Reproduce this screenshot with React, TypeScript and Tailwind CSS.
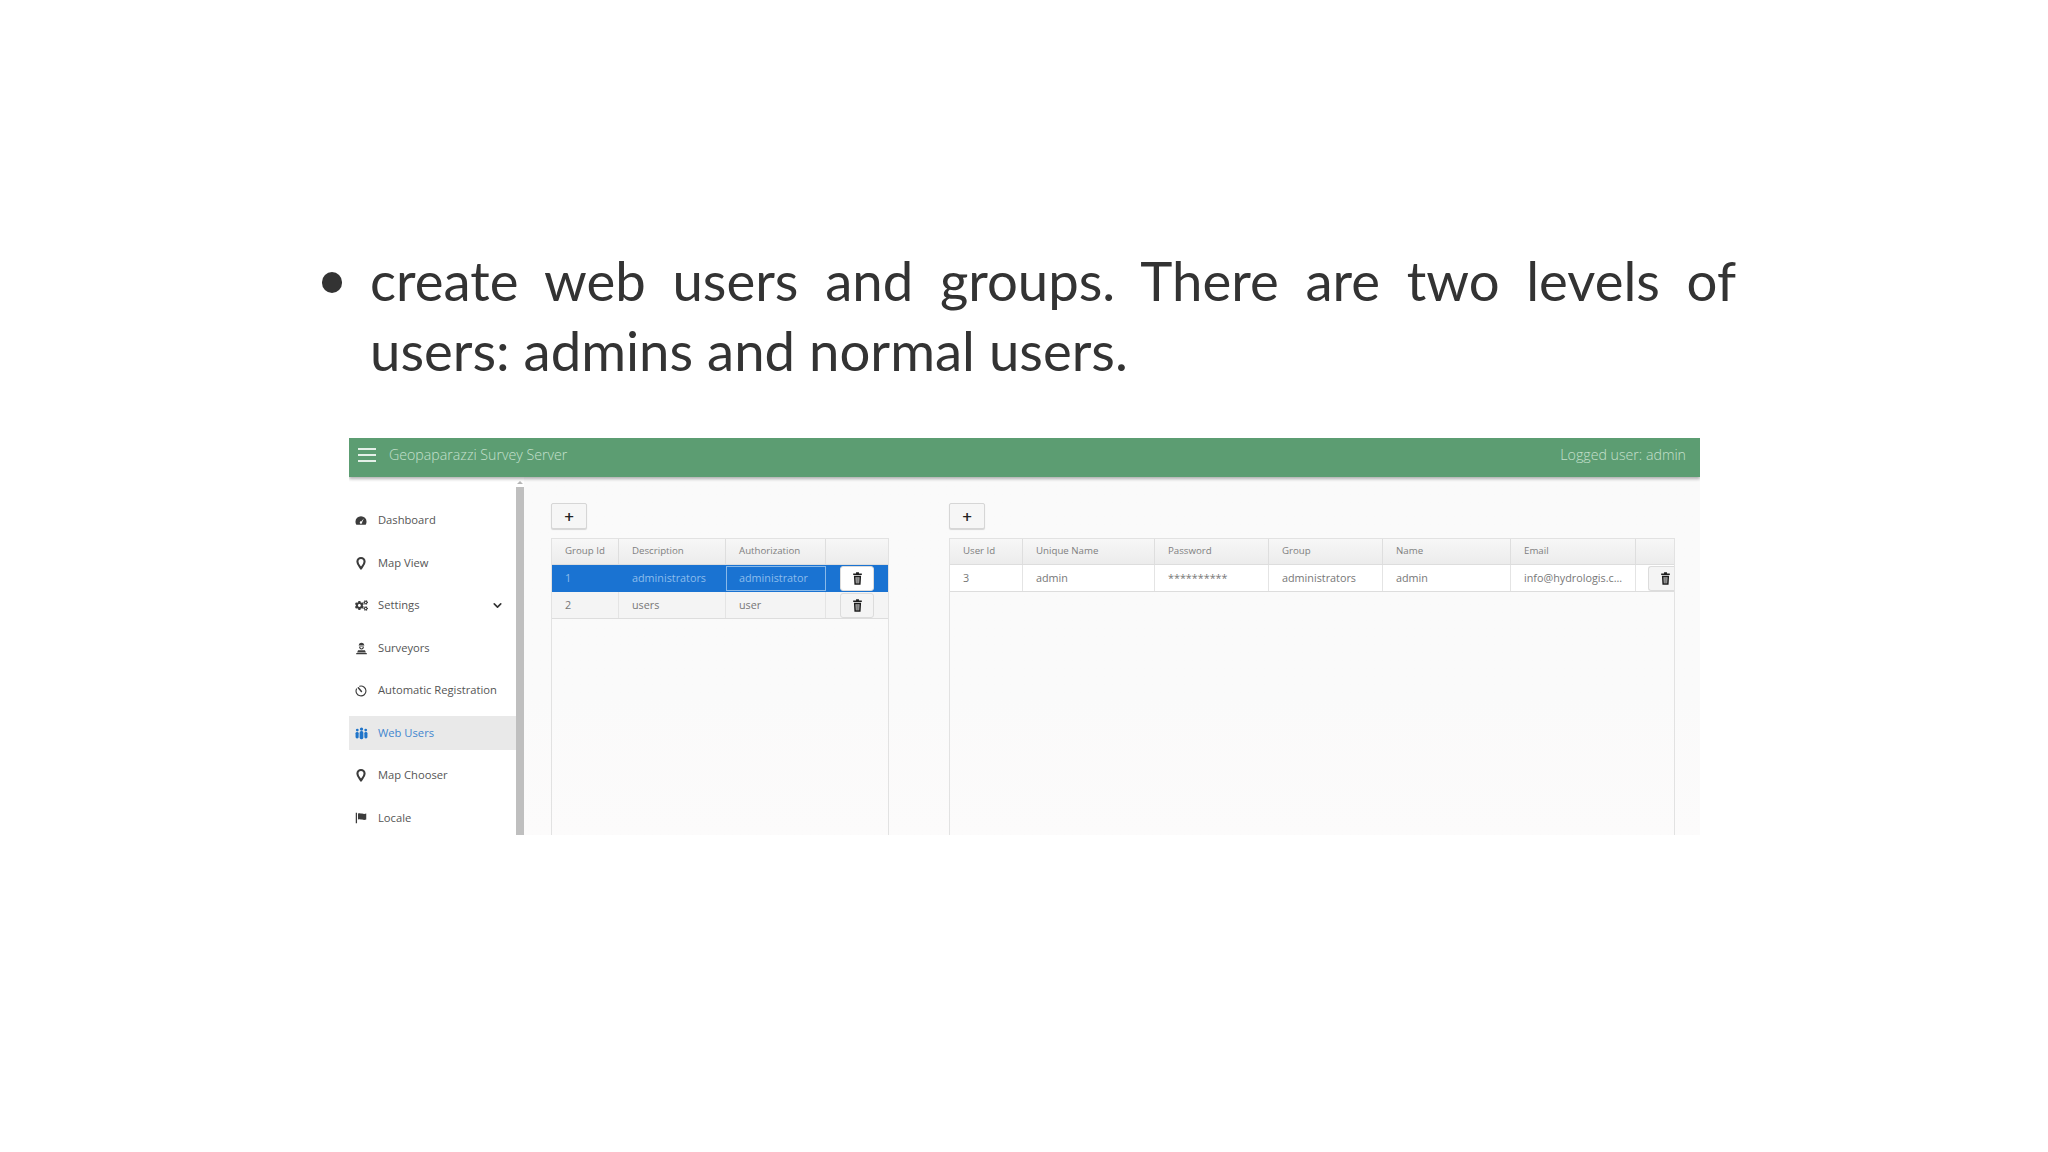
import { ChevronDown } from 'lucide-react';
import { FaCogs } from 'react-icons/fa';

function DashboardIcon() {
  return (
    <svg viewBox="0 0 16 14" className="h-[11px] w-[12px]" fill="currentColor">
      <path d="M8 1.2A7.4 7.4 0 0 0 .6 8.6c0 1.4.4 2.7 1 3.7.2.3.5.5.9.5h11c.4 0 .7-.2.9-.5.6-1 1-2.3 1-3.7A7.4 7.4 0 0 0 8 1.2Z" />
      <path d="M11.8 4.4 8.3 8.2a1.6 1.6 0 1 0 1.2 1.1Z" fill="#ffffff" />
    </svg>
  );
}

function PinIcon() {
  return (
    <svg viewBox="0 0 12 16" className="h-[13px] w-[10px]" fill="none" stroke="currentColor" strokeWidth="2.6">
      <path d="M6 14.2C4.4 11.6 1.6 8.6 1.6 5.7a4.4 4.4 0 0 1 8.8 0c0 2.9-2.8 5.9-4.4 8.5Z" strokeLinejoin="round" />
    </svg>
  );
}

function SurveyorIcon() {
  return (
    <svg viewBox="0 0 16 16" className="h-[13px] w-[13px]" fill="currentColor">
      <path d="M4.8 3.4C5 1.8 6.3.8 8 .8s3 1 3.2 2.6l.4 1H4.4l.4-1Z" />
      <path d="M5 5.4h6c0 2.2-1.2 3.8-3 3.8S5 7.6 5 5.4Zm1.4.9c.2 1 .8 1.7 1.6 1.7s1.4-.7 1.6-1.7H6.4Z" />
      <path d="M3.8 10.2h8.4l1.2 2.8H2.6l1.2-2.8Z" />
      <rect x="1.4" y="13.6" width="13.2" height="1.6" rx=".5" />
    </svg>
  );
}

function TimerIcon() {
  return (
    <svg viewBox="0 0 16 16" className="h-[12px] w-[12px]" fill="none" stroke="currentColor" strokeWidth="1.5">
      <path d="M6.2 1.6A6.6 6.6 0 1 1 2 5.2" strokeLinecap="round" />
      <path d="M4.4 3.6 8.6 8.6" strokeWidth="2" strokeLinecap="round" />
    </svg>
  );
}

function GroupIcon() {
  return (
    <svg viewBox="0 0 16 16" className="h-[13px] w-[13px]" fill="currentColor">
      <circle cx="8" cy="2.6" r="2" />
      <rect x="5.7" y="5" width="4.6" height="10" rx="2" />
      <circle cx="2.8" cy="3.8" r="1.7" />
      <rect x=".7" y="6" width="3.8" height="8" rx="1.8" />
      <circle cx="13.2" cy="3.8" r="1.7" />
      <rect x="11.5" y="6" width="3.8" height="8" rx="1.8" />
    </svg>
  );
}

function FlagIcon() {
  return (
    <svg viewBox="0 0 16 16" className="h-[12px] w-[12px]" fill="currentColor">
      <rect x="1" y="1" width="1.7" height="14" />
      <path d="M4 2c2-.8 3.800-.4 5.400.1 1.800.5 3.600.7 5.600-.1v8c-2 .8-3.800.6-5.600.1C7.800 9.600 6 9.200 4 10V2Z" />
    </svg>
  );
}

function TrashIcon() {
  return (
    <svg viewBox="0 0 10 14" className="h-[13px] w-[9px] text-[#1c1c1c]" fill="currentColor">
      <path d="M3.400 0h3.200v1.400H9.800v1.800H.2V1.400h3.200V0Z" />
      <path d="M1 4h8l-.6 10H1.600L1 4Zm1.900 1.600.3 6.800h3.600l.3-6.800H2.900Z" />
      <rect x="3.500" y="5.600" width="3" height="6.800" fill="currentColor" opacity="0.55" />
    </svg>
  );
}

const navItems = [
  { label: 'Dashboard', icon: <DashboardIcon /> },
  { label: 'Map View', icon: <PinIcon /> },
  { label: 'Settings', icon: <FaCogs className="h-[13px] w-[13px]" />, hasChevron: true },
  { label: 'Surveyors', icon: <SurveyorIcon /> },
  { label: 'Automatic Registration', icon: <TimerIcon /> },
  { label: 'Web Users', icon: <GroupIcon />, active: true },
  { label: 'Map Chooser', icon: <PinIcon /> },
  { label: 'Locale', icon: <FlagIcon /> },
];

function Sidebar() {
  return (
    <aside className="flex w-[175px] shrink-0 bg-white">
      <nav className="flex w-[167px] flex-col gap-[8.5px] pt-[26px]">
        {navItems.map((item) => (
          <div
            key={item.label}
            className={`flex h-[34px] shrink-0 items-center pr-[12px] pt-[1px] text-[11.2px] ${
              item.active ? 'bg-[#e9e9e9] text-[#3f86cf]' : 'text-[#555555]'
            }`}
          >
            <span className={`flex w-[26px] shrink-0 justify-center pr-[2px] ${item.active ? 'text-[#1f74c9]' : 'text-[#3c3c3c]'}`}>
              {item.icon}
            </span>
            <span className="ml-[3px] flex-1 whitespace-nowrap">{item.label}</span>
            {item.hasChevron ? <ChevronDown className="h-[13px] w-[13px] text-[#333333]" strokeWidth={3} /> : null}
          </div>
        ))}
      </nav>
      <div className="flex w-[8px] flex-col">
        <div className="flex h-[10px] items-center justify-center bg-white">
          <span className="h-0 w-0 border-x-[3px] border-b-[3px] border-x-transparent border-b-[#b5b5b5]" />
        </div>
        <div className="flex-1 bg-[#bfbfbf]" />
      </div>
    </aside>
  );
}

function AddButton() {
  return (
    <button
      type="button"
      className="flex h-[26px] w-[36px] items-center justify-center rounded-[2px] border border-[#d6d6d6] bg-[#f6f6f6] text-[17px] font-semibold leading-none text-[#222222] shadow-[0_1px_1px_rgba(0,0,0,0.15)]"
    >
      +
    </button>
  );
}

function TrashButton({ light }: { light?: boolean }) {
  return (
    <div
      className={`flex h-[25px] w-[34px] items-center justify-center rounded-[3px] border border-[#dcdcdc] ${
        light ? 'bg-white' : 'bg-[#f4f4f4]'
      }`}
    >
      <TrashIcon />
    </div>
  );
}

function HeaderRow({ cols }: { cols: { label: string; w: string }[] }) {
  return (
    <div className="flex h-[26px] border-b border-[#dddddd] bg-gradient-to-b from-[#f7f7f7] to-[#ececec] text-[9.7px] text-[#808080]">
      {cols.map((col) => (
        <div key={col.label || 'actions'} className={`${col.w} flex items-center border-r border-[#dedede] pl-[13px] last:border-r-0`}>
          {col.label}
        </div>
      ))}
    </div>
  );
}

const groupCols = [
  { label: 'Group Id', w: 'w-[67px]' },
  { label: 'Description', w: 'w-[107px]' },
  { label: 'Authorization', w: 'w-[100px]' },
  { label: '', w: 'flex-1' },
];

const userCols = [
  { label: 'User Id', w: 'w-[73px]' },
  { label: 'Unique Name', w: 'w-[132px]' },
  { label: 'Password', w: 'w-[114px]' },
  { label: 'Group', w: 'w-[114px]' },
  { label: 'Name', w: 'w-[128px]' },
  { label: 'Email', w: 'w-[125px]' },
  { label: '', w: 'flex-1' },
];

function GroupsPanel() {
  return (
    <section className="flex w-[338px] shrink-0 flex-col">
      <AddButton />
      <div className="mt-[9px] flex-1 border-x border-t border-[#e2e2e2]">
        <HeaderRow cols={groupCols} />
        <div className="flex h-[27px] items-center bg-[#1a73d2] text-[10.8px] text-[#8dbdec]">
          <div className="w-[67px] pl-[13px]">1</div>
          <div className="w-[107px] pl-[13px]">administrators</div>
          <div className="flex h-[25px] w-[100px] items-center border border-[#8ab9e8] pl-[12px]">administrator</div>
          <div className="flex flex-1 pl-[14px]">
            <TrashButton light />
          </div>
        </div>
        <div className="flex h-[27px] items-center border-b border-[#dddddd] bg-[#f4f4f4] text-[10.8px] text-[#777777]">
          <div className="flex h-full w-[67px] items-center border-r border-[#e4e4e4] pl-[13px]">2</div>
          <div className="flex h-full w-[107px] items-center border-r border-[#e4e4e4] pl-[13px]">users</div>
          <div className="flex h-full w-[100px] items-center border-r border-[#e4e4e4] pl-[13px]">user</div>
          <div className="flex flex-1 pl-[14px]">
            <TrashButton />
          </div>
        </div>
      </div>
    </section>
  );
}

function UsersPanel() {
  const cells = [
    { text: '3', w: 'w-[73px]' },
    { text: 'admin', w: 'w-[132px]' },
    { text: '**********', w: 'w-[114px]' },
    { text: 'administrators', w: 'w-[114px]' },
    { text: 'admin', w: 'w-[128px]' },
    { text: 'info@hydrologis.c...', w: 'w-[125px]' },
  ];

  return (
    <section className="flex w-[726px] shrink-0 flex-col">
      <AddButton />
      <div className="mt-[9px] flex-1 border-x border-t border-[#e2e2e2]">
        <HeaderRow cols={userCols} />
        <div className="flex h-[27px] items-center border-b border-[#dddddd] bg-white text-[10.8px] text-[#777777]">
          {cells.map((cell) => (
            <div key={cell.w + cell.text} className={`${cell.w} flex h-full items-center border-r border-[#e4e4e4] pl-[13px]`}>
              {cell.text}
            </div>
          ))}
          <div className="flex flex-1 justify-end">
            <div className="flex h-[25px] w-[26px] items-center rounded-l-[3px] border-y border-l border-[#dcdcdc] bg-[#f4f4f4] pl-[12px]">
              <TrashIcon />
            </div>
          </div>
        </div>
      </div>
    </section>
  );
}

export default function App() {
  return (
    <div className="h-[1152px] w-[2048px] overflow-hidden bg-white">
      <div className="flex pl-[322px] pr-[312px] pt-[245px] font-['Lato','Noto_Sans',sans-serif] text-[54.5px] leading-[70px] text-[#333333]">
        <span className="mt-[27px] h-[21px] w-[20px] shrink-0 rounded-full bg-[#333333]" />
        <p className="ml-[28px] flex-1 text-justify">
          create web users and groups. There are two levels of users: admins and normal users.
        </p>
      </div>

      <div className="ml-[349px] mt-[53px] flex h-[397px] w-[1351px] flex-col overflow-hidden font-['Open_Sans',sans-serif]">
        <header className="z-10 flex h-[39px] shrink-0 items-center bg-[#5c9d72] pb-[5px] pl-[9px] pr-[14px] text-[14.2px] font-light text-[#c5e0cd] shadow-[0_2px_3px_rgba(0,0,0,0.3)]">
          <div className="flex w-[18px] flex-col gap-[4px]">
            <span className="h-[2px] bg-[#e4f0e8]" />
            <span className="h-[2px] bg-[#e4f0e8]" />
            <span className="h-[2px] bg-[#e4f0e8]" />
          </div>
          <span className="ml-[13px] flex-1">Geopaparazzi Survey Server</span>
          <span>Logged user: admin</span>
        </header>
        <div className="flex flex-1">
          <Sidebar />
          <main className="flex flex-1 gap-[60px] bg-gradient-to-b from-[#fafafa] from-60% to-[#fcfbfb] pl-[27px] pr-[24px] pt-[26px]">
            <GroupsPanel />
            <UsersPanel />
          </main>
        </div>
      </div>
    </div>
  );
}
